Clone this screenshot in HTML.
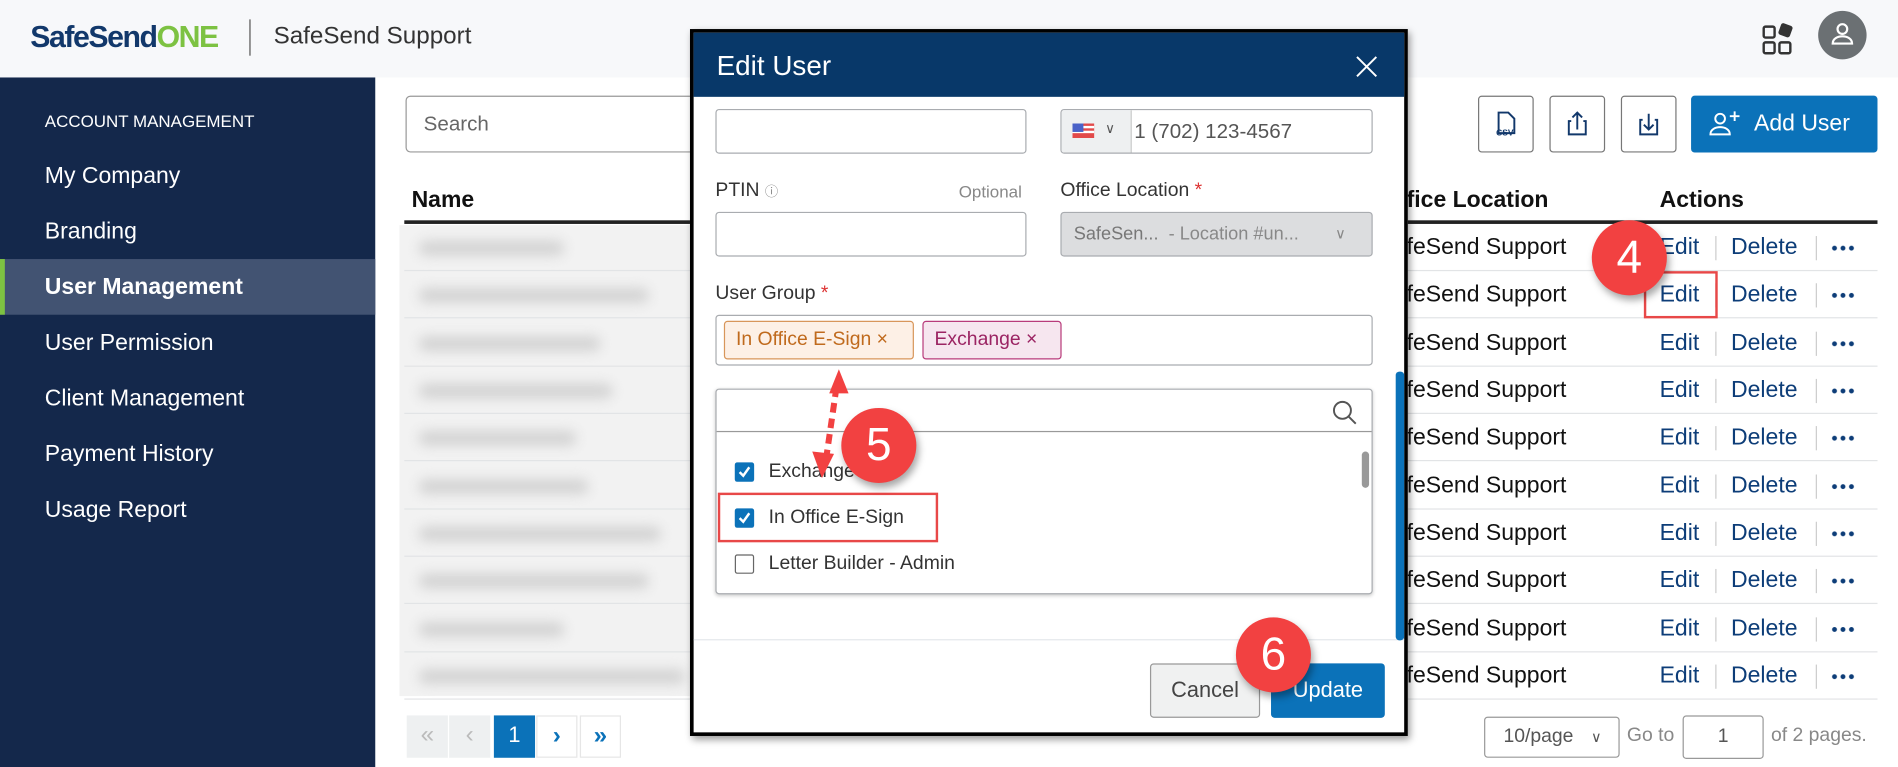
<!DOCTYPE html>
<html><head><meta charset="utf-8"><style>
*{box-sizing:border-box;margin:0;padding:0}
html,body{width:1898px;height:767px;overflow:hidden;background:#fff}
#s{position:absolute;left:0;top:0;width:1568px;height:634px;transform:scale(1.2105);transform-origin:0 0;font-family:"Liberation Sans",sans-serif;background:#fff}
.a{position:absolute}
.side div.i{position:absolute;left:37px;color:#fff;font-size:19px}
.row{position:absolute;left:334px;width:1217px;height:39px;border-bottom:1px solid #e2e4e6}
.row .loc{position:absolute;left:828px;top:9px;font-size:19px;color:#111}
.row .e{position:absolute;left:1037px;top:9px;font-size:19px;color:#0d3d78}
.row .d{position:absolute;left:1096px;top:9px;font-size:19px;color:#0d3d78}
.row .s1,.row .s2{position:absolute;top:10px;width:1px;height:20px;background:#ccc}
.row .s1{left:1083px}.row .s2{left:1166px}
.row .m{position:absolute;left:1178px;top:18px;width:20px;height:4px;background:radial-gradient(circle,#0d3d78 1.8px,transparent 2.2px) 0 0/7px 4px repeat-x}
.blur{position:absolute;height:12px;background:#d2d2d2;filter:blur(5px);border-radius:6px}
.badge{position:absolute;width:62px;height:62px;border-radius:50%;background:#f24141;color:#fff;font-size:38px;text-align:center;line-height:62px;box-shadow:2px 4px 6px rgba(0,0,0,.35)}
.inp{position:absolute;border:1px solid #a9acb0;border-radius:3px;background:#fff}
.lbl{position:absolute;font-size:16px;color:#333}
.ib{position:absolute;top:79px;width:46px;height:47px;border:1px solid #777;border-radius:3px;background:#fff}
.pg{position:absolute;top:591px;height:35px;width:34px;text-align:center;line-height:33px;font-size:20px}
.cb{position:absolute;left:34px;width:16px;height:16px;background:#0b72b9;border-radius:2px}
</style></head><body><div id="s">
<div class="a" style="left:0;top:0;width:1568px;height:64px;background:#f7f8fa"></div>
<div class="a" style="left:25px;top:17px;font-size:25px;font-weight:bold;letter-spacing:-1.2px;color:#12386b">SafeSend<span style="color:#7dc242">ONE</span></div>
<div class="a" style="left:206px;top:16px;width:1px;height:30px;background:#555"></div>
<div class="a" style="left:226px;top:19px;font-size:20px;color:#333">SafeSend Support</div>
<svg class="a" style="left:1455px;top:19px" width="28" height="28" viewBox="0 0 28 28" fill="none" stroke="#333" stroke-width="2"><rect x="2" y="3" width="9" height="9" rx="1.5"/><rect x="2" y="16" width="9" height="9" rx="1.5"/><rect x="15" y="16" width="9" height="9" rx="1.5"/><rect x="16" y="2" width="8" height="8" rx="1" transform="rotate(20 20 6)" fill="#333"/></svg>
<div class="a" style="left:1502px;top:9px;width:40px;height:40px;border-radius:50%;background:#6b7073"></div>
<svg class="a" style="left:1510px;top:16px" width="24" height="24" viewBox="0 0 24 24" fill="none" stroke="#fff" stroke-width="1.8"><circle cx="12" cy="8" r="4"/><path d="M4 20c0-4 4-6 8-6s8 2 8 6z"/></svg>
<div class="a side" style="left:0;top:64px;width:310px;height:570px;background:#14284b">
<div class="i" style="top:28px;font-size:14px">ACCOUNT MANAGEMENT</div>
<div class="i" style="top:71px">My Company</div>
<div class="i" style="top:117px">Branding</div>
<div class="a" style="left:0;top:150px;width:310px;height:46px;background:#425372;border-left:4px solid #7dc242"></div>
<div class="i" style="top:163px;font-weight:bold">User Management</div>
<div class="i" style="top:209px">User Permission</div>
<div class="i" style="top:255px">Client Management</div>
<div class="i" style="top:301px">Payment History</div>
<div class="i" style="top:347px">Usage Report</div>
</div>
<div class="a" style="left:335px;top:79px;width:300px;height:47px;border:1px solid #999;border-radius:4px"></div>
<div class="a" style="left:350px;top:93px;font-size:17px;color:#666">Search</div>
<div class="ib" style="left:1221px"><svg width="44" height="45" viewBox="0 0 44 45" fill="none" stroke="#12386b" stroke-width="1.6"><path d="M16 13h8l5 5v12h-13z"/><text x="14" y="32" font-size="7" fill="#12386b" stroke="none" font-family="Liberation Sans" font-weight="bold">CSV</text></svg></div>
<div class="ib" style="left:1280px"><svg width="44" height="45" viewBox="0 0 44 45" fill="none" stroke="#12386b" stroke-width="1.6"><path d="M17 20h-2v11h14v-11h-2M22 27v-14M18 17l4-4 4 4"/></svg></div>
<div class="ib" style="left:1339px"><svg width="44" height="45" viewBox="0 0 44 45" fill="none" stroke="#12386b" stroke-width="1.6"><path d="M17 19h-2v12h14v-12h-2M22 14v13M18 23l4 4 4-4"/></svg></div>
<div class="a" style="left:1397px;top:79px;width:154px;height:47px;background:#0b72b9;border-radius:3px;color:#fff;font-size:19px;line-height:47px;padding-left:52px">Add User</div>
<svg class="a" style="left:1410px;top:90px" width="32" height="24" viewBox="0 0 32 24" fill="none" stroke="#fff" stroke-width="1.6"><circle cx="11" cy="8" r="4"/><path d="M3 21c0-4 4-6 8-6s8 2 8 6z"/><path d="M23 2v8M19 6h8"/></svg>
<div class="a" style="left:340px;top:155px;font-size:19px;font-weight:bold;color:#111">Name</div>
<div class="a" style="left:1162px;top:155px;font-size:19px;font-weight:bold;color:#111">fice Location</div>
<div class="a" style="left:1371px;top:155px;font-size:19px;font-weight:bold;color:#111">Actions</div>
<div class="a" style="left:334px;top:182px;width:1217px;height:3px;background:#222"></div>
<div class="a" style="left:330px;top:186px;width:240px;height:389px;background:#f2f2f2"></div>
<div class="row" style="top:185px"><div class="blur" style="left:12px;top:14px;width:120px"></div><div class="loc">feSend Support</div><div class="e">Edit</div><div class="s1"></div><div class="d">Delete</div><div class="s2"></div><div class="m"></div></div>
<div class="row" style="top:224px"><div class="blur" style="left:12px;top:14px;width:190px"></div><div class="loc">feSend Support</div><div class="e">Edit</div><div class="s1"></div><div class="d">Delete</div><div class="s2"></div><div class="m"></div></div>
<div class="row" style="top:264px"><div class="blur" style="left:12px;top:14px;width:150px"></div><div class="loc">feSend Support</div><div class="e">Edit</div><div class="s1"></div><div class="d">Delete</div><div class="s2"></div><div class="m"></div></div>
<div class="row" style="top:303px"><div class="blur" style="left:12px;top:14px;width:160px"></div><div class="loc">feSend Support</div><div class="e">Edit</div><div class="s1"></div><div class="d">Delete</div><div class="s2"></div><div class="m"></div></div>
<div class="row" style="top:342px"><div class="blur" style="left:12px;top:14px;width:130px"></div><div class="loc">feSend Support</div><div class="e">Edit</div><div class="s1"></div><div class="d">Delete</div><div class="s2"></div><div class="m"></div></div>
<div class="row" style="top:382px"><div class="blur" style="left:12px;top:14px;width:140px"></div><div class="loc">feSend Support</div><div class="e">Edit</div><div class="s1"></div><div class="d">Delete</div><div class="s2"></div><div class="m"></div></div>
<div class="row" style="top:421px"><div class="blur" style="left:12px;top:14px;width:200px"></div><div class="loc">feSend Support</div><div class="e">Edit</div><div class="s1"></div><div class="d">Delete</div><div class="s2"></div><div class="m"></div></div>
<div class="row" style="top:460px"><div class="blur" style="left:12px;top:14px;width:190px"></div><div class="loc">feSend Support</div><div class="e">Edit</div><div class="s1"></div><div class="d">Delete</div><div class="s2"></div><div class="m"></div></div>
<div class="row" style="top:500px"><div class="blur" style="left:12px;top:14px;width:120px"></div><div class="loc">feSend Support</div><div class="e">Edit</div><div class="s1"></div><div class="d">Delete</div><div class="s2"></div><div class="m"></div></div>
<div class="row" style="top:539px"><div class="blur" style="left:12px;top:14px;width:220px"></div><div class="loc">feSend Support</div><div class="e">Edit</div><div class="s1"></div><div class="d">Delete</div><div class="s2"></div><div class="m"></div></div>
<div class="a" style="left:1358px;top:224px;width:61px;height:39px;border:2px solid #e84848"></div>
<div class="pg" style="left:336px;background:#eef0f1;color:#bbb">«</div>
<div class="pg" style="left:371px;background:#eef0f1;color:#bbb">‹</div>
<div class="pg" style="left:408px;background:#0b72b9;color:#fff;font-size:18px">1</div>
<div class="pg" style="left:443px;border:1px solid #e6e6e6;color:#0b72b9;font-weight:bold">›</div>
<div class="pg" style="left:479px;border:1px solid #e6e6e6;color:#0b72b9;font-weight:bold">»</div>
<div class="a" style="left:1226px;top:592px;width:112px;height:34px;border:1px solid #999;border-radius:3px;font-size:16px;color:#555;line-height:32px;padding-left:15px">10/page <span style="font-size:12px;margin-left:10px">∨</span></div>
<div class="a" style="left:1344px;top:599px;font-size:16px;color:#888">Go to</div>
<div class="a" style="left:1390px;top:591px;width:67px;height:36px;border:1px solid #999;border-radius:3px;font-size:16px;color:#555;line-height:34px;text-align:center">1</div>
<div class="a" style="left:1463px;top:599px;font-size:16px;color:#888">of 2 pages.</div>
<div class="a" style="left:570px;top:24px;width:593px;height:584px;border:3px solid #000;background:#fff;box-shadow:2px 3px 6px rgba(0,0,0,.4)">
 <div class="a" style="left:0;top:0;width:587px;height:53px;background:#083869"></div>
 <div class="a" style="left:19px;top:14px;font-size:23px;color:#fff">Edit User</div>
 <svg class="a" style="left:546px;top:18px" width="20" height="20" viewBox="0 0 20 20" stroke="#fff" stroke-width="1.6"><path d="M2 2l16 16M18 2l-16 16"/></svg>
 <div class="inp" style="left:18px;top:63px;width:257px;height:37px"></div>
 <div class="inp" style="left:303px;top:63px;width:258px;height:37px;overflow:hidden"><div class="a" style="left:0;top:0;width:58px;height:35px;background:#eef0f1;border-right:1px solid #ccc"></div>
  <svg class="a" style="left:9px;top:11px" width="18" height="12" viewBox="0 0 18 12"><rect width="18" height="12" fill="#e24a4a"/><rect y="2" width="18" height="2" fill="#fff"/><rect y="6" width="18" height="2" fill="#fff"/><rect width="9" height="7" fill="#4a62c8"/></svg>
  <div class="a" style="left:36px;top:9px;font-size:11px;color:#555">∨</div>
  <div class="a" style="left:60px;top:8px;font-size:17px;color:#555">1 (702) 123-4567</div></div>
 <div class="lbl" style="left:18px;top:122px">PTIN <span style="font-size:11px;color:#888">ⓘ</span></div>
 <div class="lbl" style="left:219px;top:123px;font-size:14px;color:#888">Optional</div>
 <div class="lbl" style="left:303px;top:122px">Office Location <span style="color:#d33">*</span></div>
 <div class="inp" style="left:18px;top:148px;width:257px;height:37px"></div>
 <div class="inp" style="left:303px;top:148px;width:258px;height:37px;background:#dcdddf;font-size:15px;color:#888;line-height:35px;padding-left:10px"><span style="color:#777">SafeSen...</span>&nbsp; - Location #un... <span style="position:absolute;left:226px;font-size:12px">∨</span></div>
 <div class="lbl" style="left:18px;top:207px">User Group <span style="color:#d33">*</span></div>
 <div class="inp" style="left:18px;top:233px;width:543px;height:42px"></div>
 <div class="a" style="left:25px;top:238px;width:157px;height:32px;border:1px solid #d8965a;background:#fdf0e6;border-radius:3px;color:#c06a1d;font-size:16px;line-height:30px;padding-left:9px">In Office E-Sign ×</div>
 <div class="a" style="left:189px;top:238px;width:115px;height:32px;border:1px solid #b83b7b;background:#f6e6ef;border-radius:3px;color:#9b2463;font-size:16px;line-height:30px;padding-left:9px">Exchange ×</div>
 <div class="inp" style="left:18px;top:294px;width:543px;height:170px;box-shadow:0 1px 3px rgba(0,0,0,.2)"></div>
 <div class="a" style="left:19px;top:329px;width:541px;height:1px;background:#999"></div>
 <svg class="a" style="left:527px;top:303px" width="22" height="22" viewBox="0 0 22 22" fill="none" stroke="#555" stroke-width="1.6"><circle cx="9" cy="9" r="7"/><path d="M14 14l6 6"/></svg>
 <div class="a" style="left:552px;top:346px;width:6px;height:30px;border-radius:3px;background:#999"></div>
 <div class="cb" style="top:355px"><svg width="16" height="16" viewBox="0 0 16 16" fill="none" stroke="#fff" stroke-width="2"><path d="M4 8l3 3 5-7"/></svg></div>
 <div class="lbl" style="left:62px;top:354px">Exchange</div>
 <div class="cb" style="top:393px"><svg width="16" height="16" viewBox="0 0 16 16" fill="none" stroke="#fff" stroke-width="2"><path d="M4 8l3 3 5-7"/></svg></div>
 <div class="lbl" style="left:62px;top:392px">In Office E-Sign</div>
 <div class="a" style="left:20px;top:380px;width:182px;height:41px;border:2px solid #e84848"></div>
 <div class="a" style="left:34px;top:431px;width:16px;height:16px;border:1px solid #666;border-radius:2px"></div>
 <div class="lbl" style="left:62px;top:430px">Letter Builder - Admin</div>
 <div class="a" style="left:0;top:501px;width:587px;height:1px;background:#e4e8ec"></div>
 <div class="a" style="left:377px;top:521px;width:91px;height:45px;border:1px solid #999;background:#f0f1f1;border-radius:3px;font-size:18px;color:#444;text-align:center;line-height:43px">Cancel</div>
 <div class="a" style="left:477px;top:521px;width:94px;height:45px;background:#0b72b9;border-radius:3px;font-size:18px;color:#fff;text-align:center;line-height:45px">Update</div>
</div>
<div class="a" style="left:1153px;top:307px;width:7px;height:222px;background:#0b72b9;border-radius:3px"></div>
<svg class="a" style="left:660px;top:300px" width="50" height="100" viewBox="0 0 50 100"><path d="M31 20L22 82" stroke="#f24141" stroke-width="5" stroke-dasharray="8 5"/><path d="M33 5l8 20h-16z" fill="#f24141"/><path d="M19 95l-8-22 18 2z" fill="#f24141"/></svg>
<div class="badge" style="left:1315px;top:182px">4</div>
<div class="badge" style="left:695px;top:337px">5</div>
<div class="badge" style="left:1021px;top:510px">6</div>
</div></body></html>
